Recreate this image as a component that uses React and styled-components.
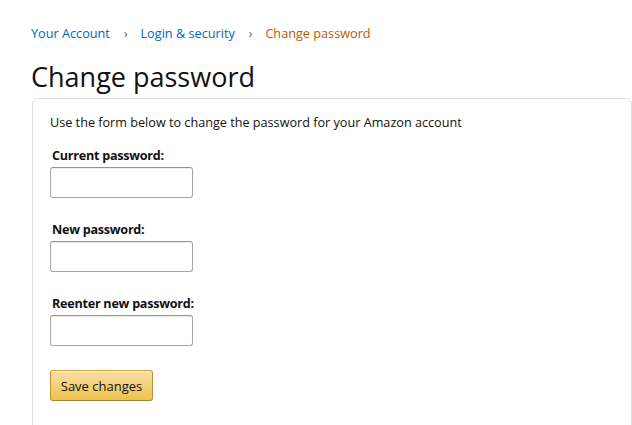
import React from 'react';
import styled, { createGlobalStyle } from 'styled-components';

const GlobalStyle = createGlobalStyle`
  body {
    margin: 0;
    background: #ffffff;
    font-family: "Open Sans", "Liberation Sans", sans-serif;
    color: #111111;
  }
`;

const Page = styled.div`
  padding: 24px 0 0 31px;
  height: 425px;
  box-sizing: border-box;
  overflow: hidden;
`;

const Breadcrumb = styled.nav`
  display: flex;
  align-items: center;
  font-size: 12.7px;
  line-height: 19px;
`;

const Crumb = styled.a`
  color: ${props => (props.current ? '#c45500' : '#0066c0')};
  text-decoration: none;
`;

const Separator = styled.span`
  color: #555;
  font-size: 12px;
  margin: 0 13px 0 14px;
`;

const Title = styled.h1`
  margin: 16px 0 3px;
  font-size: 27px;
  line-height: 36px;
  font-weight: 400;
  color: #111;
`;

const Panel = styled.div`
  margin-left: 1px;
  border: 1px solid #dddddd;
  border-radius: 6px;
  padding: 14px 17px 40px;
  height: 400px;
  box-sizing: border-box;
`;

const Intro = styled.p`
  margin: 0 0 14px;
  font-size: 12.65px;
  line-height: 19px;
`;

const Field = styled.div`
  display: flex;
  flex-direction: column;
  align-items: flex-start;
  margin-bottom: 22px;
`;

const Label = styled.label`
  font-size: 12.6px;
  letter-spacing: -0.25px;
  line-height: 19px;
  font-weight: 700;
  padding-left: 2px;
  margin-bottom: 2px;
`;

const Input = styled.input`
  width: 143px;
  height: 31px;
  box-sizing: border-box;
  border: 1px solid #a6a6a6;
  border-top-color: #949494;
  border-radius: 3px;
  box-shadow: 0 1px 0 rgba(255, 255, 255, 0.5), 0 1px 0 rgba(0, 0, 0, 0.07) inset;
  padding: 3px 7px;
  font-size: 13px;
`;

const SaveButton = styled.button`
  margin-top: 2px;
  width: 103px;
  height: 31px;
  border: 1px solid;
  border-color: #c8a24c #b89437 #a88734;
  border-radius: 3px;
  background: linear-gradient(to bottom, #f7dfa5, #f0c14b);
  box-shadow: 0 1px 0 rgba(255, 255, 255, 0.4) inset;
  font-family: "Open Sans", "Liberation Sans", sans-serif;
  font-size: 13px;
  color: #111;
  cursor: pointer;
`;

const fields = [
  { id: 'current', label: 'Current password:' },
  { id: 'new', label: 'New password:' },
  { id: 'reenter', label: 'Reenter new password:' },
];

export default function App() {
  return (
    <Page>
      <GlobalStyle />
      <Breadcrumb>
        <Crumb href="#">Your Account</Crumb>
        <Separator>›</Separator>
        <Crumb href="#">Login &amp; security</Crumb>
        <Separator>›</Separator>
        <Crumb current>Change password</Crumb>
      </Breadcrumb>
      <Title>Change password</Title>
      <Panel>
        <Intro>Use the form below to change the password for your Amazon account</Intro>
        {fields.map(f => (
          <Field key={f.id}>
            <Label htmlFor={f.id}>{f.label}</Label>
            <Input id={f.id} type="password" />
          </Field>
        ))}
        <SaveButton>Save changes</SaveButton>
      </Panel>
    </Page>
  );
}
